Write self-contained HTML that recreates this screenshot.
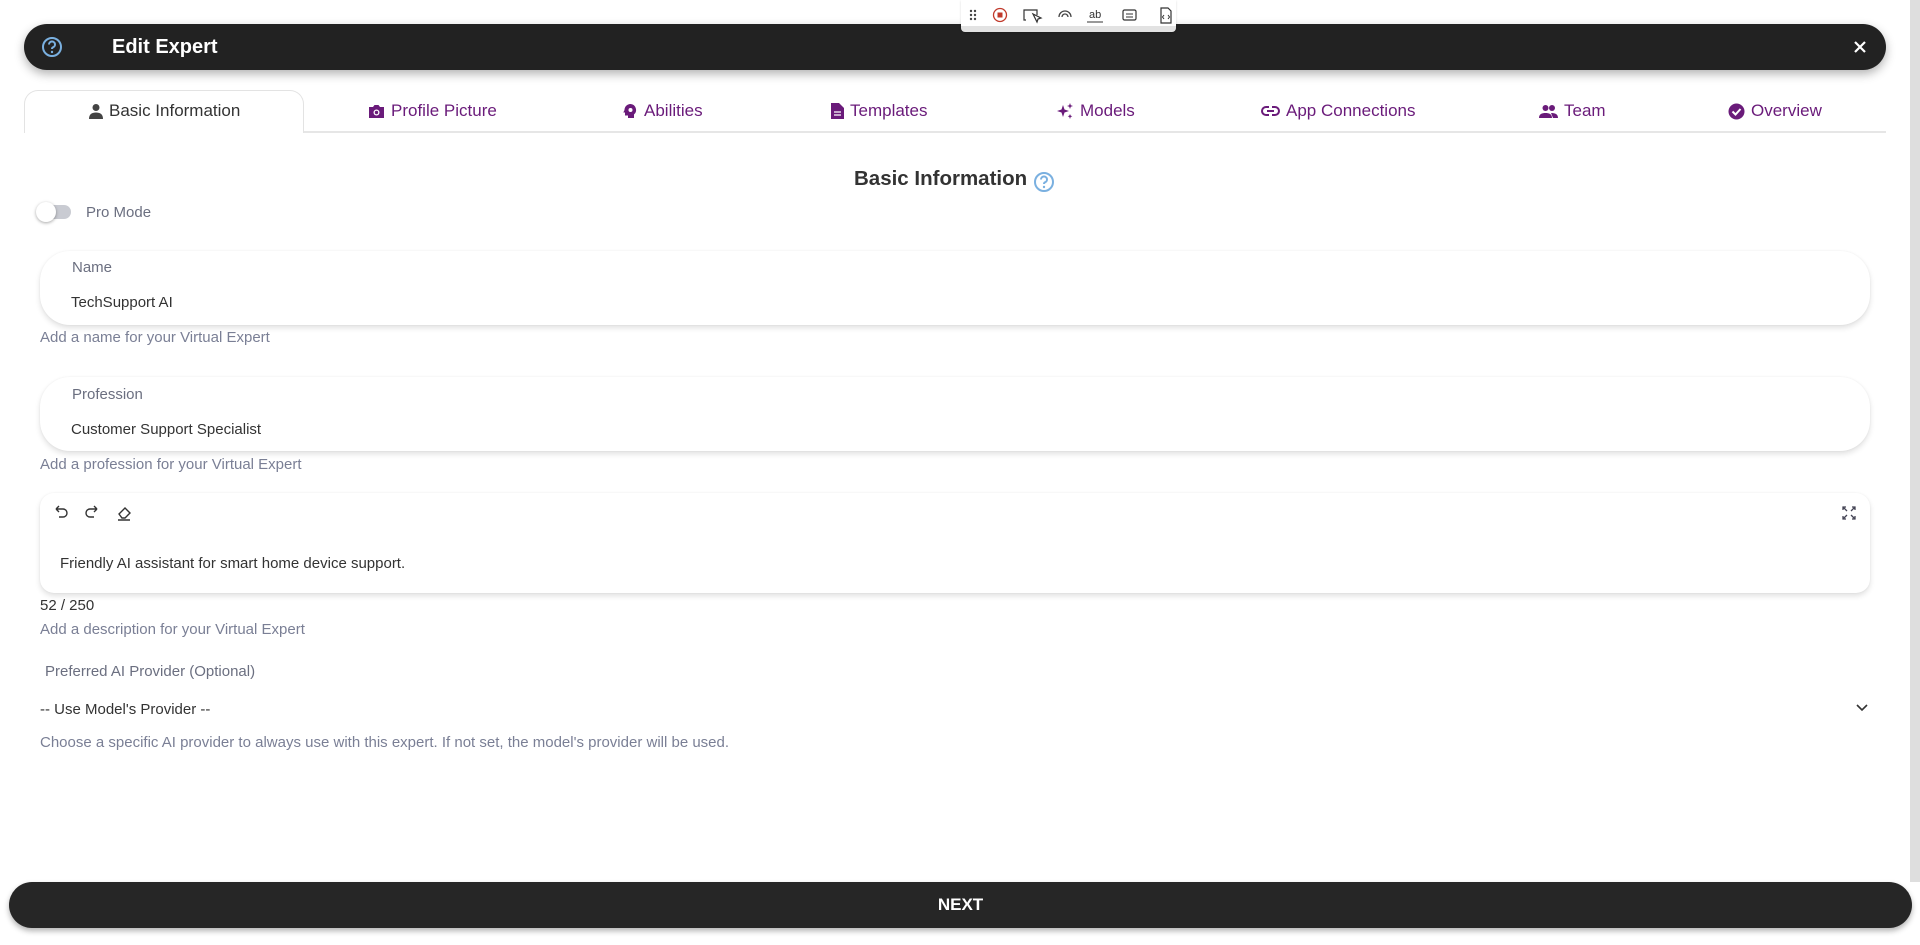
<!DOCTYPE html>
<html><head><meta charset="utf-8"><style>
*{box-sizing:border-box;margin:0;padding:0}
body{width:1920px;height:945px;overflow:hidden;background:#fff;font-family:"Liberation Sans",sans-serif;position:relative;color:#333}
.abs{position:absolute}
.hdr{left:24px;top:24px;width:1862px;height:46px;background:#222;border-radius:23px;box-shadow:0 4px 10px rgba(0,0,0,.3)}
.tb{left:961px;top:0;width:215px;height:32px;background:#fff;border-bottom:6px solid #e2e2e2;border-radius:0 0 4px 4px;box-shadow:0 1px 2px rgba(0,0,0,.15)}
.tab{top:101px;font-size:17px;color:#6a1b7a;display:flex;align-items:center;gap:6px;white-space:nowrap}
.field{left:40px;width:1830px;height:74px;border-radius:30px;background:#fff;box-shadow:0 3px 6px rgba(0,0,0,.12),0 0 2px rgba(0,0,0,.05)}
.lbl{font-size:15px;color:#6b6f80}
.val{font-size:15px;color:#333}
.help{font-size:15px;color:#7a7f95;left:40px}
</style></head><body>
<div class="abs" style="right:0;top:0;width:10px;height:882px;background:#dedede"></div>
<div class="abs hdr"></div>
<svg class="abs" style="left:41px;top:36px" width="22" height="22" viewBox="0 0 22 22"><circle cx="11" cy="11" r="9" fill="none" stroke="#7ab0e0" stroke-width="2"/><path d="M8 8.5a3 3 0 1 1 4 2.8c-.8.4-1 .9-1 1.7" fill="none" stroke="#7ab0e0" stroke-width="2"/><circle cx="11" cy="16" r="1.2" fill="#7ab0e0"/></svg>
<div class="abs" style="left:112px;top:36px;font-size:20px;font-weight:bold;color:#fff">Edit Expert</div>
<svg class="abs" style="left:1853px;top:40px" width="14" height="14" viewBox="0 0 14 14"><path d="M2 2L12 12M12 2L2 12" stroke="#fff" stroke-width="2.2"/></svg>
<div class="abs tb">
<svg width="215" height="26" viewBox="0 0 215 26"><g fill="#444"><circle cx="10" cy="11" r="1.2"/><circle cx="10" cy="15" r="1.2"/><circle cx="10" cy="19" r="1.2"/><circle cx="14" cy="11" r="1.2"/><circle cx="14" cy="15" r="1.2"/><circle cx="14" cy="19" r="1.2"/></g>
<circle cx="39" cy="15" r="6.5" fill="none" stroke="#c0392b" stroke-width="1.3"/><rect x="36.5" y="12.5" width="5" height="5" fill="#c0392b"/>
<path d="M65 20h-2v-10h13v5M72 14l4 8 1-3 3-1z" fill="none" stroke="#333" stroke-width="1.2"/>
<path d="M98 17a6 6 0 0 1 12 0M101 17a3 3 0 0 1 6 0" fill="none" stroke="#444" stroke-width="1.3"/>
<text x="128" y="18" font-size="11" fill="#333" font-family="Liberation Sans">ab</text><path d="M126 22h16" stroke="#333"/>
<rect x="162" y="10" width="13" height="10" rx="1.5" fill="none" stroke="#333" stroke-width="1.2"/><path d="M165 14h7M165 17h7" stroke="#333"/>
<path d="M200 8h7l3 3v12h-10z" fill="none" stroke="#333" stroke-width="1.2"/><path d="M203 15l-1.5 2 1.5 2M207 15l1.5 2-1.5 2" fill="none" stroke="#333"/></svg></div>

<div class="abs" style="left:24px;top:131px;width:1862px;height:2px;background:#e6e6e6"></div>
<div class="abs" style="left:24px;top:90px;width:280px;height:43px;background:#fff;border:1px solid #e3e3e3;border-bottom:none;border-radius:14px 14px 0 0"></div>
<div class="abs tab" style="left:89px;color:#333"><svg width="14" height="16" viewBox="0 0 14 16"><circle cx="7" cy="4.5" r="3.5" fill="#444"/><path d="M0 16c0-5 3-6.5 7-6.5s7 1.5 7 6.5z" fill="#444"/></svg>Basic Information</div>
<div class="abs tab" style="left:368px"><svg width="17" height="15" viewBox="0 0 17 15"><path d="M1 3h4l1.5-2h4L12 3h4v11H1z" fill="#6a1b7a"/><circle cx="8.5" cy="8.5" r="3" fill="#fff"/><circle cx="8.5" cy="8.5" r="1.7" fill="#6a1b7a"/></svg>Profile Picture</div>
<div class="abs tab" style="left:623px"><svg width="15" height="16" viewBox="0 0 15 16"><path d="M7.5 1a6 6 0 0 0-6 6l-1.2 2.5H2v3h3v2.5h6v-3.5a6 6 0 0 0-3.5-10.5z" fill="#6a1b7a"/><circle cx="7.5" cy="7" r="2" fill="#fff"/></svg>Abilities</div>
<div class="abs tab" style="left:831px"><svg width="13" height="16" viewBox="0 0 13 16"><path d="M0 0h8l5 5v11H0z" fill="#6a1b7a"/><path d="M3 9h7M3 12h7" stroke="#fff" stroke-width="1.3"/></svg>Templates</div>
<div class="abs tab" style="left:1056px"><svg width="18" height="18" viewBox="0 0 18 18"><path d="M7 3l1.5 4.5L13 9l-4.5 1.5L7 15l-1.5-4.5L1 9l4.5-1.5z" fill="#6a1b7a"/><path d="M14 1l.8 2.2L17 4l-2.2.8L14 7l-.8-2.2L11 4l2.2-.8zM14 12l.7 1.6 1.6.7-1.6.7L14 17l-.7-2-1.6-.7 1.6-.7z" fill="#6a1b7a"/></svg>Models</div>
<div class="abs tab" style="left:1261px"><svg width="19" height="12" viewBox="0 0 19 12"><path d="M8 2H5a4 4 0 0 0 0 8h3M11 2h3a4 4 0 0 1 0 8h-3M6 6h7" fill="none" stroke="#6a1b7a" stroke-width="2"/></svg>App Connections</div>
<div class="abs tab" style="left:1539px"><svg width="19" height="14" viewBox="0 0 19 14"><circle cx="6.5" cy="4" r="3" fill="#6a1b7a"/><circle cx="13" cy="4" r="3" fill="#6a1b7a"/><path d="M0 14c0-4 3-5 6.5-5s6.5 1 6.5 5zM12 9c4 0 7 1 7 5h-5" fill="#6a1b7a"/></svg>Team</div>
<div class="abs tab" style="left:1728px"><svg width="17" height="17" viewBox="0 0 17 17"><circle cx="8.5" cy="8.5" r="8" fill="#6a1b7a"/><path d="M4.5 8.5l3 3 5-5.5" fill="none" stroke="#fff" stroke-width="2"/></svg>Overview</div>

<div class="abs" style="left:854px;top:167px;font-size:20.5px;font-weight:bold;color:#333">Basic Information</div>
<svg class="abs" style="left:1033px;top:171px" width="22" height="22" viewBox="0 0 22 22"><circle cx="11" cy="11" r="9" fill="none" stroke="#7ab0e0" stroke-width="2"/><path d="M8 8.5a3 3 0 1 1 4 2.8c-.8.4-1 .9-1 1.7" fill="none" stroke="#7ab0e0" stroke-width="2"/><circle cx="11" cy="16" r="1.2" fill="#7ab0e0"/></svg>

<div class="abs" style="left:38px;top:205px;width:33px;height:14px;border-radius:7px;background:#c9cbd2"></div>
<div class="abs" style="left:36px;top:202px;width:20px;height:20px;border-radius:50%;background:#fff;box-shadow:0 1px 3px rgba(0,0,0,.35)"></div>
<div class="abs lbl" style="left:86px;top:204px">Pro Mode</div>

<div class="abs field" style="top:251px"></div>
<div class="abs lbl" style="left:72px;top:259px">Name</div>
<div class="abs val" style="left:71px;top:294px">TechSupport AI</div>
<div class="abs help" style="top:329px">Add a name for your Virtual Expert</div>

<div class="abs field" style="top:377px"></div>
<div class="abs lbl" style="left:72px;top:386px">Profession</div>
<div class="abs val" style="left:71px;top:421px">Customer Support Specialist</div>
<div class="abs help" style="top:456px">Add a profession for your Virtual Expert</div>

<div class="abs" style="left:40px;top:493px;width:1830px;height:100px;border-radius:14px;background:#fff;box-shadow:0 3px 6px rgba(0,0,0,.12),0 0 2px rgba(0,0,0,.05)"></div>
<svg class="abs" style="left:52px;top:503px" width="90" height="20" viewBox="0 0 90 20"><path d="M4 6h7a4 4 0 0 1 0 8H7M4 6l3-3M4 6l3 3" fill="none" stroke="#333" stroke-width="1.4"/><path d="M45 6h-7a4 4 0 0 0 0 8h4M45 6l-3-3M45 6l-3 3" fill="none" stroke="#333" stroke-width="1.4"/><path d="M67 11l6-6 5 5-5 5h-3zM66 17h12" fill="none" stroke="#333" stroke-width="1.4"/></svg>
<svg class="abs" style="left:1842px;top:506px" width="14" height="14" viewBox="0 0 14 14"><path d="M1 1l4 4M13 1l-4 4M1 13l4-4M13 13l-4-4M1 4V1h3M10 1h3v3M1 10v3h3M10 13h3v-3" fill="none" stroke="#445" stroke-width="1.3"/></svg>
<div class="abs val" style="left:60px;top:555px">Friendly AI assistant for smart home device support.</div>
<div class="abs val" style="left:40px;top:597px">52 / 250</div>
<div class="abs help" style="top:621px">Add a description for your Virtual Expert</div>

<div class="abs lbl" style="left:45px;top:663px">Preferred AI Provider (Optional)</div>
<div class="abs val" style="left:40px;top:701px">-- Use Model's Provider --</div>
<svg class="abs" style="left:1855px;top:703px" width="14" height="10" viewBox="0 0 14 10"><path d="M2 2l5 5 5-5" fill="none" stroke="#333" stroke-width="1.6"/></svg>
<div class="abs help" style="top:734px">Choose a specific AI provider to always use with this expert. If not set, the model's provider will be used.</div>

<div class="abs" style="left:9px;top:882px;width:1903px;height:46px;border-radius:23px;background:#262626;box-shadow:0 3px 6px rgba(0,0,0,.3);color:#fff;font-weight:bold;font-size:17px;text-align:center;line-height:46px">NEXT</div>
</body></html>
